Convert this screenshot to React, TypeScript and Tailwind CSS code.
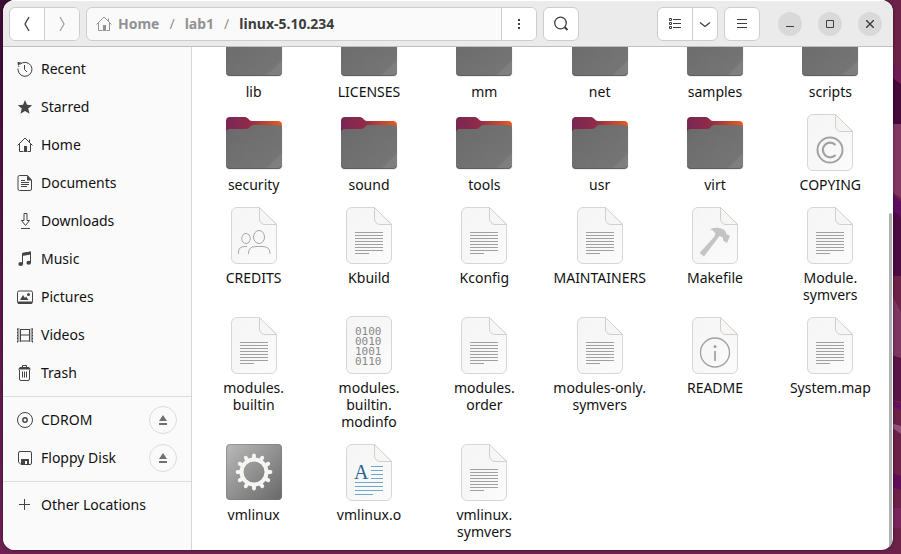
import React from "react";

const SANS = "font-['Noto_Sans','Open_Sans',sans-serif]";

function Stroke({ children, size = 16, className = "" }: { children: React.ReactNode; size?: number; className?: string }) {
  return (
    <svg width={size} height={size} viewBox={`0 0 ${size} ${size}`} fill="none" stroke="currentColor" strokeWidth="1" className={`shrink-0 ${className}`} aria-hidden="true">
      {children}
    </svg>
  );
}

const house = (
  <>
    <path d="M.5 8.500 8 1l7.500 7.500M2.500 7v7.500h4M10.500 14.500h3V7M12.500 5V2.500" />
    <path d="M7 9h3v6H7z" fill="currentColor" stroke="none" />
  </>
);

const places: { name: string; icon: React.ReactNode }[] = [
  {
    name: "Recent",
    icon: (
      <>
        <path d="M3.200 3.200A7 7 0 1 1 1 9" />
        <path d="M1 9a7 7 0 0 1 1-4" strokeDasharray="1.500 1.500" />
        <path d="M.5 1 4.500 1.500 1 5z" fill="currentColor" stroke="none" />
        <path d="M7.500 4v4.500L10 11" />
      </>
    ),
  },
  {
    name: "Starred",
    icon: <path d="m8 1 2 4.800 5.200.4-4 3.400 1.300 5.100L8 12l-4.500 2.700 1.300-5.100-4-3.400L6 5.800z" fill="currentColor" stroke="none" />,
  },
  { name: "Home", icon: house },
  {
    name: "Documents",
    icon: (
      <>
        <path d="M10.500.5h-8a1.500 1.500 0 0 0-1.500 1.500v12a1.500 1.500 0 0 0 1.500 1.500h10.500a1.500 1.500 0 0 0 1.500-1.500V5z" />
        <path d="M10 .5 15 5.500h-5z" fill="currentColor" stroke="none" />
        <path d="M4 5.500h4M4 7.500h8M4 9.500h8M4 11.500h6" />
      </>
    ),
  },
  { name: "Downloads", icon: <path d="M7 .5h3v7h2.500l-4 5-4-5H7zM4 15.500h9" /> },
  {
    name: "Music",
    icon: (
      <>
        <path d="M5.500 13V2.500L13.500 1v10.500" />
        <path d="M5 2 14 .5v3L5 5z" fill="currentColor" stroke="none" />
        <ellipse cx="3.700" cy="13" rx="2.300" ry="2" fill="currentColor" stroke="none" />
        <ellipse cx="11.700" cy="11.800" rx="2.300" ry="2" fill="currentColor" stroke="none" />
      </>
    ),
  },
  {
    name: "Pictures",
    icon: (
      <>
        <rect x=".5" y="2" width="15" height="12" rx="1.500" />
        <path d="M.5 12.500h15v1a1.500 1.500 0 0 1-1.500 1.500H2a1.500 1.500 0 0 1-1.500-1.500zM3 11l3-5 2 3 1-1.500 2.500 3.500z" fill="currentColor" stroke="none" />
        <circle cx="11.500" cy="5.500" r="1.500" fill="currentColor" stroke="none" />
      </>
    ),
  },
  {
    name: "Videos",
    icon: (
      <>
        <path d="M3.500 2v12.500M12.500 2v12.500M3 2.500h10M3 8h10M3 14h10" />
        <path d="M1.500 1.500v14M14.500 1.500v14" strokeWidth="2" strokeDasharray="1 1" />
        <path d="M.5 1.500v14M15.500 1.500v14" strokeDasharray="2 1" />
      </>
    ),
  },
  {
    name: "Trash",
    icon: (
      <>
        <path d="M2.500 5v9A1.500 1.500 0 0 0 4 15.500h7a1.500 1.500 0 0 0 1.500-1.500V5M5.500 6.500v6M7.500 6.500v6M9.500 6.500v6M5.500 2V.5h4V2" />
        <path d="M1 4.500 3 2h9l2 2.500z" fill="currentColor" stroke="none" />
      </>
    ),
  },
];

const drives: { name: string; icon: React.ReactNode }[] = [
  {
    name: "CDROM",
    icon: (
      <>
        <circle cx="8" cy="8" r="7.500" />
        <circle cx="8" cy="8" r="2.200" strokeWidth="1.400" />
      </>
    ),
  },
  {
    name: "Floppy Disk",
    icon: (
      <>
        <path d="M3 1.500h10A1.500 1.500 0 0 1 14.500 3v10a1.500 1.500 0 0 1-1.500 1.500H4L1.500 12V3A1.500 1.500 0 0 1 3 1.500z" />
        <path d="M4 9h8v5.500h-2V11H8v3.500H4z" fill="currentColor" stroke="none" />
      </>
    ),
  },
];

function Place({ name, icon, eject = false }: { name: string; icon: React.ReactNode; eject?: boolean }) {
  return (
    <li className="flex h-[38px] items-center pr-3.5 pl-3.5">
      <a href="#" className="flex flex-1 items-center gap-2 text-sm whitespace-nowrap text-[#111]">
        <Stroke className="text-[#444]">{icon}</Stroke>
        {name}
      </a>
      {eject && (
        <button aria-label={`Eject ${name}`} className="flex size-7 items-center justify-center rounded-full border border-[#dcdcdc] text-[#707070]">
          <svg width="10" height="10" viewBox="0 0 10 10" fill="currentColor" aria-hidden="true">
            <path d="M5 0 9 6H1zM1 8h8v2H1z" />
          </svg>
        </button>
      )}
    </li>
  );
}

type Kind = "folder" | "text" | "copying" | "credits" | "make" | "binary" | "readme" | "exec" | "object";

function Gear() {
  return (
    <g stroke="#f5f5f2" fill="none">
      <circle cx="32" cy="32" r="12.500" strokeWidth="4" />
      {Array.from({ length: 12 }, (_, i) => (
        <path key={i} d="M32 18.500v-3" strokeWidth="3.800" strokeLinecap="round" transform={`rotate(${i * 30} 32 32)`} />
      ))}
    </g>
  );
}

function Emblem({ kind }: { kind: Kind }) {
  switch (kind) {
    case "text":
      return <path d="M18 29.500h28M18 32.500h28M18 35.500h28M18 38.500h28M18 41.500h28M18 44.500h28M18 47.500h28M18 50.500h14" stroke="#a0a0a0" />;
    case "copying":
      return (
        <g fill="none" stroke="#a3a3a3" strokeWidth="2">
          <circle cx="32" cy="40" r="12.500" />
          <path d="M37.500 35a7.300 7.300 0 1 0 0 10" strokeWidth="2.300" />
        </g>
      );
    case "credits":
      return (
        <g fill="none" stroke="#a8a8a8">
          <ellipse cx="24" cy="35.500" rx="4.300" ry="5" />
          <ellipse cx="37" cy="34" rx="5.500" ry="6.500" />
          <path d="M16.500 51v-2q0-5.500 6.500-5.500h2M26.500 51v-1q0-6.500 7.500-6.500h6q8 0 8 6.500v1" />
        </g>
      );
    case "make":
      return <path d="M27 26q10-3 15 1.500l1.500 3.500 3.500 2-3 7-4-2.500v-3l-3.500-1.500L21 53.500 16.500 50l15-16.500 1-3Q31 27.500 27 26z" fill="#c4c4c4" />;
    case "readme":
      return (
        <g fill="none" stroke="#a0a0a0">
          <circle cx="32" cy="39.500" r="14.500" strokeWidth="1.300" />
          <path d="M32 38v10" strokeWidth="1.700" />
          <circle cx="32" cy="33.500" r="1.500" fill="#a0a0a0" stroke="none" />
        </g>
      );
    case "object":
      return (
        <g>
          <path d="M34 26.500h12M34 30.500h12M34 34.500h12M34 38.500h12M18 42.500h28M18 46.500h28M18 50.500h28M18 54.500h18" stroke="#6fabc9" />
          <text x="17" y="39" fontSize="20" fill="#2a6496" fontFamily="Liberation Serif, serif">A</text>
        </g>
      );
    case "binary":
      return (
        <text fontSize="11" fill="#888" fontFamily="DejaVu Sans Mono, monospace">
          <tspan x="18" y="22">0100</tspan>
          <tspan x="18" y="32">0010</tspan>
          <tspan x="18" y="42">1001</tspan>
          <tspan x="18" y="52">0110</tspan>
        </text>
      );
    default:
      return null;
  }
}

function FileIcon({ kind }: { kind: Kind }) {
  return (
    <svg width="64" height="64" viewBox="0 0 64 64" className="shrink-0" aria-hidden="true">
      {kind === "folder" ? (
        <>
          <rect x="4" y="15" width="56.500" height="45" rx="4" fill="#000" opacity=".07" />
          <path d="M4 11a4 4 0 0 1 4-4h15c3 0 4 4 7 4h26a4 4 0 0 1 4 4v15H4z" fill="url(#tab)" />
          <path d="M4 23a4 4 0 0 1 4-4h16c4 0 4-4 7-4h25a4 4 0 0 1 4 4v36a4 4 0 0 1-4 4H8a4 4 0 0 1-4-4z" fill="url(#front)" />
          <path d="M60 43v12a4 4 0 0 1-4 4H44z" fill="#fff" opacity=".07" />
          <path d="M4.500 56q.5 2.500 3.500 2.500h48q3 0 3.500-2.500" fill="none" stroke="#555" opacity=".7" />
        </>
      ) : kind === "exec" ? (
        <>
          <rect x="4" y="4" width="56" height="56" rx="4" fill="url(#steel)" />
          <rect x="4.500" y="4.500" width="55" height="55" rx="4" fill="none" stroke="#777" opacity=".5" />
          <Gear />
        </>
      ) : (
        <>
          <path
            d={kind === "binary" ? "M15 3.500h34a5.500 5.500 0 0 1 5.500 5.500v46a5.500 5.500 0 0 1-5.500 5.500H15a5.500 5.500 0 0 1-5.500-5.500v-46a5.500 5.500 0 0 1 5.500-5.500z" : "M15 4.500h22L54.500 21v34a5.500 5.500 0 0 1-5.500 5.500H15a5.500 5.500 0 0 1-5.500-5.500v-45a5.500 5.500 0 0 1 5.500-5.500z"}
            fill="url(#paper)"
            stroke="#d6d6d6"
          />
          {kind !== "binary" && <path d="M37.500 4.500V16a5.500 5.500 0 0 0 5.500 5.500h11.500z" fill="#f7f6f5" stroke="#d0d0d0" />}
          <Emblem kind={kind} />
        </>
      )}
    </svg>
  );
}

const files: [string, Kind][] = [
  ["lib", "folder"], ["LICENSES", "folder"], ["mm", "folder"], ["net", "folder"], ["samples", "folder"], ["scripts", "folder"],
  ["security", "folder"], ["sound", "folder"], ["tools", "folder"], ["usr", "folder"], ["virt", "folder"], ["COPYING", "copying"],
  ["CREDITS", "credits"], ["Kbuild", "text"], ["Kconfig", "text"], ["MAINTAINERS", "text"], ["Makefile", "make"], ["Module.\nsymvers", "text"],
  ["modules.\nbuiltin", "text"], ["modules.\nbuiltin.\nmodinfo", "binary"], ["modules.\norder", "text"], ["modules-only.\nsymvers", "text"], ["README", "readme"], ["System.map", "text"],
  ["vmlinux", "exec"], ["vmlinux.o", "object"], ["vmlinux.\nsymvers", "text"],
];

function Defs() {
  return (
    <svg width="0" height="0" className="absolute" aria-hidden="true">
      <defs>
        <linearGradient id="tab">
          <stop offset="0" stopColor="#782654" />
          <stop offset=".42" stopColor="#922b48" />
          <stop offset="1" stopColor="#e95c22" />
        </linearGradient>
        <linearGradient id="front" x2="1" y2="1">
          <stop offset="0" stopColor="#6a6a6a" />
          <stop offset="1" stopColor="#777" />
        </linearGradient>
        <linearGradient id="steel" x2="1" y2="1">
          <stop offset="0" stopColor="#bababa" />
          <stop offset="1" stopColor="#686868" />
        </linearGradient>
        <linearGradient id="paper" x2="1" y2="1">
          <stop offset="0" stopColor="#f6f6f6" />
          <stop offset=".5" stopColor="#f7f7f7" />
          <stop offset="1" stopColor="#fcfcfc" />
        </linearGradient>
      </defs>
    </svg>
  );
}

function Wallpaper() {
  return (
    <svg viewBox="0 0 20 554" preserveAspectRatio="none" className="absolute inset-y-0 right-0 h-full w-5" aria-hidden="true">
      <path d="M0 0h20v554H0z" fill="#6b2148" />
      <path d="M0 60 20 68v16L0 76z" fill="#6f1b55" />
      <path d="M0 70 20 84v40H0z" fill="#45093a" />
      <path d="M0 124h20v74L0 184z" fill="#823763" />
      <path d="M0 184 20 202v18L0 206z" fill="#5d0d60" />
      <path d="M0 200 20 218v58H0z" fill="#4b0a42" />
      <path d="M0 276 20 312v50L0 345z" fill="#7d3562" />
      <path d="M0 352 20 358v44L0 396z" fill="#591347" />
      <path d="M0 396 20 404v6L0 402z" fill="#650f62" />
      <path d="M0 420 20 426v8z" fill="#91517b" />
      <path d="M0 470 20 476v14L0 484z" fill="#5f0d5b" />
      <path d="M0 508h20v20H0z" fill="#79245c" />
    </svg>
  );
}

const box = "flex h-[34px] shrink-0 items-center rounded-md border border-[#cdcdcd] bg-white text-[#3d3d3d] overflow-hidden";
const round = "flex size-6 shrink-0 items-center justify-center rounded-full bg-[#d9d9d9] text-[#3d3d3d]";

function Header() {
  return (
    <header className="flex h-[47px] shrink-0 items-center gap-1.5 border-t border-b border-t-white border-b-[#bfbfbf] bg-[#ebebeb] pr-[11px] pl-1.5">
      <div className={box}>
        <button aria-label="Back" className="flex h-full w-[34px] items-center justify-center">
          <Stroke><path d="M10 1 6 8l4 7" strokeWidth="1.300" /></Stroke>
        </button>
        <button aria-label="Forward" className="flex h-full w-[35px] items-center justify-center border-l border-[#cdcdcd] bg-[#fafafa] text-[#a0a0a0]">
          <Stroke><path d="m6 1 4 7-4 7" strokeWidth="1.300" /></Stroke>
        </button>
      </div>
      <nav aria-label="Path" className="flex h-[34px] min-w-0 flex-1 items-center overflow-hidden rounded-md border border-[#cdcdcd] bg-[#fafafa] text-sm font-bold whitespace-nowrap text-[#929292]">
        <a href="#" className="flex items-center gap-1.5 pl-[9px]"><Stroke>{house}</Stroke>Home</a>
        <span className="px-2.5 font-normal">/</span>
        <a href="#">lab1</a>
        <span className="px-2.5 font-normal">/</span>
        <a href="#" className="text-[#3d3d3d]">linux-5.10.234</a>
        <button aria-label="Folder menu" className="ml-auto flex h-full w-[35px] items-center justify-center border-l border-[#cdcdcd] bg-white text-[#3d3d3d]">
          <svg width="2" height="12" viewBox="0 0 2 12" fill="currentColor" aria-hidden="true"><path d="M0 1h2v2H0zM0 5h2v2H0zM0 9h2v2H0z" /></svg>
        </button>
      </nav>
      <button aria-label="Search" className={`${box} mr-[72px] w-9 justify-center`}>
        <Stroke><circle cx="7.500" cy="7" r="5.800" strokeWidth="1.300" /><path d="m11.500 11 3 3" strokeWidth="2" /></Stroke>
      </button>
      <div className={box}>
        <button aria-label="List view" className="flex h-full w-[34px] items-center justify-center">
          <Stroke><path d="M6 3.500h8M6 7.500h8M6 11.500h8M2.500 2.500h2v2h-2zM2.500 6.500h2v2h-2zM2.500 10.500h2v2h-2z" /></Stroke>
        </button>
        <button aria-label="View options" className="flex h-full w-[25px] items-center justify-center border-l border-[#cdcdcd]">
          <Stroke><path d="m3 6.500 5 4 5-4" strokeWidth="1.300" /></Stroke>
        </button>
      </div>
      <button aria-label="Main menu" className={`${box} w-9 justify-center`}>
        <Stroke><path d="M3 3.500h10M3 7.500h10M3 11.500h10" /></Stroke>
      </button>
      <div className="ml-3 flex gap-4">
        <button aria-label="Minimize" className={round}><Stroke size={8}><path d="M0 6.500h8" /></Stroke></button>
        <button aria-label="Maximize" className={round}><Stroke size={8}><path d="M.5.5h7v7h-7z" /></Stroke></button>
        <button aria-label="Close" className={round}><Stroke size={8}><path d="m0 0 8 8M8 0 0 8" strokeWidth="1.400" /></Stroke></button>
      </div>
    </header>
  );
}

export default function App() {
  return (
    <div className={`${SANS} relative flex h-screen bg-linear-to-b from-[#3d0d33] via-[#5c1747] to-[#6d2150] pr-2 pb-1 pl-[3px] text-[#111]`}>
      <Defs />
      <Wallpaper />
      <div className="relative flex min-w-0 flex-1 flex-col overflow-hidden rounded-xl bg-white shadow-[0_0_3px_#0008]">
        <Header />
        <div className="flex min-h-0 flex-1">
          <aside className="w-[189px] shrink-0 border-r border-[#d6d6d6] bg-[#fafafa] pt-[3px]">
            <ul>{places.map((p) => <Place key={p.name} {...p} />)}</ul>
            <ul className="mt-1 border-t border-[#dcdcdc] pt-1">{drives.map((p) => <Place key={p.name} {...p} eject />)}</ul>
            <ul className="mt-1 border-t border-[#dcdcdc] pt-1">
              <Place name="Other Locations" icon={<path d="M2 7.500h11M7.500 2v11" />} />
            </ul>
          </aside>
          <main className="relative flex min-w-0 flex-1 flex-col justify-end overflow-hidden pr-[5px] pl-1">
            <ul className="grid grid-cols-6">
              {files.map(([name, kind]) => (
                <li key={name} className="flex flex-col items-center gap-0.5 pb-2.5">
                  <FileIcon kind={kind} />
                  <span className="text-center text-sm leading-[17px] whitespace-pre">{name}</span>
                </li>
              ))}
            </ul>
            <div className="absolute right-px bottom-0 h-[67%] w-[3px] rounded-t bg-[#b0b0b0]" />
          </main>
        </div>
      </div>
    </div>
  );
}
